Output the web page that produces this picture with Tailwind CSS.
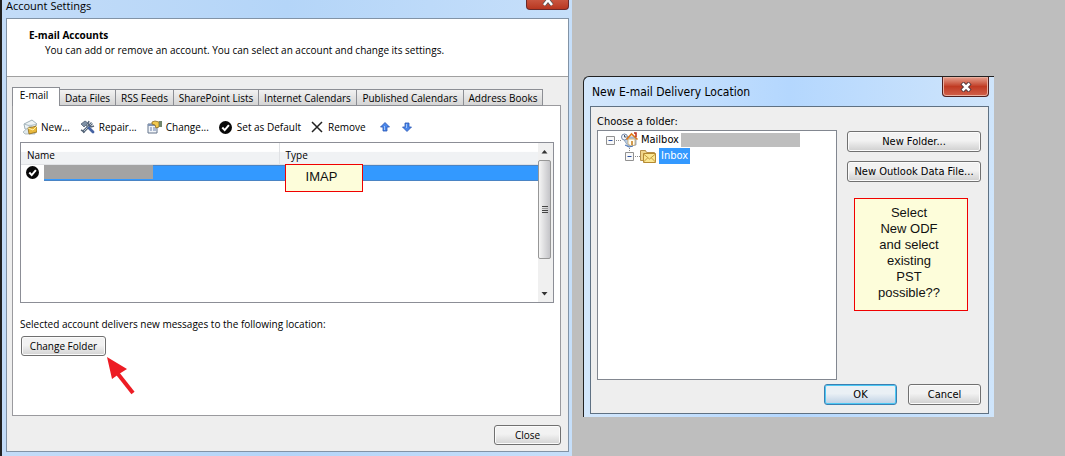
<!DOCTYPE html>
<html lang="en">
<head>
<meta charset="utf-8">
<title>Account Settings</title>
<script src="https://cdn.jsdelivr.net/npm/@tailwindcss/browser@4"></script>
</head>
<body class="bg-[#bebebe] text-black">
<main class="grid min-h-screen grid-cols-[572fr_11fr_411fr_71fr]">

  <!-- Account Settings window -->
  <section class="flex flex-col border-l-2 border-[#222] bg-linear-to-r from-[#c3dcf8] via-[#b4d5f8] to-[#c6dffa] pr-[3px] pb-1 pl-1 font-['Open_Sans','Noto_Sans',sans-serif] text-[10px] leading-4 font-medium" aria-labelledby="t1">
    <header class="flex h-[18px] items-start justify-between">
      <h1 id="t1" class="text-[11px] leading-3 font-normal">Account Settings</h1>
      <button aria-label="Close window" class="flex h-[10px] w-[43px] items-end justify-center overflow-hidden rounded-b border border-t-0 border-[#6b2a2a] bg-linear-to-b from-[#c9553f] to-[#b8361f]">
        <svg class="h-[9px] w-3" viewBox="0 0 12 9"><path d="M2-5l8 10M10-5L2 5" stroke="#555" stroke-width="4"/><path d="M2-5l8 10M10-5L2 5" stroke="#fff" stroke-width="2.5"/></svg>
      </button>
    </header>
    <div class="flex flex-1 flex-col border border-[#8293a6] bg-[#eee]">
      <div class="h-[58px] border-b border-[#a0a0a0] bg-white pt-[8px] pl-[22px]">
        <h2 class="text-[10px] leading-4 font-bold">E-mail Accounts</h2>
        <p class="pl-4 leading-[14px]">You can add or remove an account. You can select an account and change its settings.</p>
      </div>
      <div class="flex flex-1 flex-col pt-[10px] pr-[7px] pl-[5px]">
        <div role="tablist" class="relative z-10 -mb-px flex items-end leading-[14px] whitespace-nowrap">
          <button role="tab" aria-selected="true" class="h-[19px] w-12 border border-b-0 border-[#8c8e94] bg-white pb-1 pr-1 text-center">E-mail</button>
          <button role="tab" class="h-[17px] w-14 border border-l-0 border-[#8c8e94] bg-linear-to-b from-[#f2f2f2] to-[#d4d4d4]">Data Files</button>
          <button role="tab" class="h-[17px] w-[58px] border border-l-0 border-[#8c8e94] bg-linear-to-b from-[#f2f2f2] to-[#d4d4d4]">RSS Feeds</button>
          <button role="tab" class="h-[17px] w-[85px] border border-l-0 border-[#8c8e94] bg-linear-to-b from-[#f2f2f2] to-[#d4d4d4]">SharePoint Lists</button>
          <button role="tab" class="h-[17px] w-[98px] border border-l-0 border-[#8c8e94] bg-linear-to-b from-[#f2f2f2] to-[#d4d4d4]">Internet Calendars</button>
          <button role="tab" class="h-[17px] w-[107px] border border-l-0 border-[#8c8e94] bg-linear-to-b from-[#f2f2f2] to-[#d4d4d4]">Published Calendars</button>
          <button role="tab" class="h-[17px] w-[79px] border border-l-0 border-[#8c8e94] bg-linear-to-b from-[#f2f2f2] to-[#d4d4d4]">Address Books</button>
        </div>
        <div role="tabpanel" class="flex-1 border border-[#9a9a9e] bg-white pt-[13px] pr-[6px] pl-[7px]">
          <div class="flex h-4 items-center gap-[10px] pl-[3px] whitespace-nowrap">
            <button class="flex items-center gap-1">
              <svg class="h-4 w-[14px]" viewBox="0 0 14 16"><path d="M1 5l8-4 5 4-5 6-7-1z" fill="#eef3f5" stroke="#9fb0b8"/><path d="M1 5l6 2 7-2M0 13l7-6 5 3v5H2z" fill="#dfe8ec" stroke="#a5b3ba" stroke-width=".8"/><path d="M5 9l9-2v6l-8 2z" fill="#e9b93c" stroke="#8c6a19" stroke-width=".8"/><path d="M5 9l5 2 4-4" fill="none" stroke="#fff0ac"/></svg>New...</button>
            <button class="flex items-center gap-1">
              <svg class="h-[14px] w-[15px]" viewBox="0 0 15 14"><path d="M3 12L12 3" stroke="#58677a" stroke-width="2.6"/><path d="M3 12L12 3" stroke="#b9c8d6" stroke-width="1"/><path d="M9 1l-1 3 3 3 3-1M1 10l2 1 1 2" fill="none" stroke="#58677a" stroke-width="1.5"/><path d="M1 4l4-3 3 2-4 4z" fill="#7f91a5" stroke="#46566a" stroke-width=".7"/><path d="M6 5l3 3" stroke="#66788c" stroke-width="1.6"/><path d="M9 8l4 4" stroke="#4563a3" stroke-width="2.8" stroke-linecap="round"/></svg>Repair...</button>
            <button class="flex items-center gap-1">
              <svg class="h-[14px] w-[15px]" viewBox="0 0 15 14"><path d="M1 4h9v9H1z" fill="#f1f4f8" stroke="#65758c"/><path d="M1 4h9v2H1z" fill="#8094b4"/><path d="M3 8h2m1 0h3M3 10h2m1 0h3" stroke="#687fa9"/><path d="M5 2l3-1 4 1v5l-3 1-1-3-3-1z" fill="#f1c94f" stroke="#8d6b24" stroke-width=".8"/><path d="M12 1h3v6h-3z" fill="#72866c"/></svg>Change...</button>
            <button class="flex items-center gap-[5px]">
              <svg class="h-[13px] w-[13px]" viewBox="0 0 13 13"><circle cx="6.500" cy="6.500" r="6.500" fill="#080808"/><path d="M3.300 6.500l2.400 2.600 4.200-5" fill="none" stroke="#fff" stroke-width="2"/></svg>Set as Default</button>
            <button class="flex items-center gap-[5px]">
              <svg class="h-3 w-3" viewBox="0 0 12 12"><path d="M1 1l10 10M11 1L1 11" stroke="#222" stroke-width="1.500"/></svg>Remove</button>
            <button aria-label="Move up" class="ml-1"><svg class="h-[10px] w-[10px]" viewBox="0 0 10 10"><path d="M5 .5L9.500 5H7v4H3V5H.5z" fill="#4a86ea" stroke="#2a56b4" stroke-width=".8"/><path d="M4 4h1v4H4z" fill="#9fc6fb"/></svg></button>
            <button aria-label="Move down" class="ml-[2px]"><svg class="h-[10px] w-[10px]" viewBox="0 0 10 10"><path d="M5 9.500L.5 5H3V1h4v4h2.500z" fill="#4a86ea" stroke="#2a56b4" stroke-width=".8"/><path d="M4 2h1v4H4z" fill="#9fc6fb"/></svg></button>
          </div>
          <div class="relative mt-[7px] flex h-[161px] border border-[#8c8e96]">
            <div class="min-w-0 flex-1">
              <table class="w-full table-fixed border-collapse text-left">
                <thead><tr class="h-[21px] bg-linear-to-b from-white from-40% to-[#f0f2f4] to-45%">
                  <th class="w-[258px] border-r border-b border-[#e0e2e5] pt-1 pl-[6px] font-medium">Name</th>
                  <th class="border-b border-[#e0e2e5] pt-1 pl-[6px] font-medium">Type</th>
                </tr></thead>
                <tbody><tr class="h-4">
                  <td class="p-0"><div class="flex h-4 items-center gap-[5px] pl-[5px]">
                    <svg class="h-[13px] w-[13px] shrink-0" viewBox="0 0 13 13" role="img" aria-label="Default account"><circle cx="6.500" cy="6.500" r="6.500" fill="#080808"/><path d="M3.300 6.500l2.400 2.600 4.200-5" fill="none" stroke="#fff" stroke-width="2"/></svg>
                    <div class="h-4 flex-1 border-y border-[#4a84c4] bg-[#3399ff]"><div class="-mt-px h-[14px] w-[109px] bg-[#a3a3a3]"></div></div>
                  </div></td>
                  <td class="p-0"><div class="-mr-[2px] h-4 border-y border-r border-[#4a84c4] bg-[#3399ff]"></div></td>
                </tr></tbody>
              </table>
            </div>
            <div class="flex w-[15px] flex-col items-start bg-[#f0f0f0]">
              <svg class="h-[17px] w-[13px]" viewBox="0 0 13 17"><path d="M3.500 10.500h6l-3-3.500z" fill="#333"/></svg>
              <div class="flex h-[99px] w-[13px] flex-col items-center justify-center gap-px rounded-xs border border-[#979797] bg-linear-to-r from-[#f5f5f5] to-[#c4c4c8]">
                <i class="h-px w-[6px] bg-[#444]"></i><i class="h-px w-[6px] bg-[#999]"></i><i class="h-px w-[6px] bg-[#444]"></i><i class="h-px w-[6px] bg-[#444]"></i>
              </div>
              <svg class="mt-auto h-[17px] w-[13px]" viewBox="0 0 13 17"><path d="M3.500 7h6l-3 3.500z" fill="#333"/></svg>
            </div>
            <div class="absolute top-[21px] left-[264px] flex h-7 w-[78px] items-center justify-center border border-[#f00000] bg-[#fdfdda] pr-[5px] pb-[2px] font-['Liberation_Sans',sans-serif] text-[13px] font-normal text-[#111]">IMAP</div>
          </div>
          <p class="mt-[13px]">Selected account delivers new messages to the following location:</p>
          <div class="mt-1 flex items-start">
            <button class="ml-px h-5 w-[85px] rounded-[3px] border border-[#707070] bg-linear-to-b from-[#f2f2f2] from-45% to-[#d3d3d3] leading-[14px] whitespace-nowrap shadow-[inset_0_0_0_1px_#fbfbfb]">Change Folder</button>
            <svg class="mt-5 h-[40px] w-[30px]" viewBox="0 0 30 40"><path d="M12 18l15 19" stroke="#ed1c24" stroke-width="4"/><path d="M1 1l20 12-8 5-7 5z" fill="#ed1c24"/></svg>
          </div>
        </div>
        <div class="flex h-[35px] items-start justify-end pt-[9px]">
          <button class="h-5 w-[67px] rounded-[3px] border border-[#707070] bg-linear-to-b from-[#f2f2f2] from-45% to-[#d3d3d3] leading-[14px] shadow-[inset_0_0_0_1px_#fbfbfb]">Close</button>
        </div>
      </div>
    </div>
  </section>

  <!-- New E-mail Delivery Location window -->
  <section class="col-start-3 mt-[76px] self-start rounded-tl-md border-t border-l border-[#222] bg-linear-to-r from-[#d3e7fc] via-[#b4d7fe] to-[#cfe5fb] pr-[5px] pb-[3px] pl-[6px] font-['DejaVu_Sans_Condensed','Noto_Sans',sans-serif] text-[11px] leading-4" aria-labelledby="t2">
    <header class="flex h-[29px] items-start justify-between">
      <h1 id="t2" class="pt-[7px] pl-[2px] text-[12px]">New E-mail Delivery Location</h1>
      <button aria-label="Close window" class="flex h-5 w-[47px] items-center justify-center rounded-b-[4px] border border-t-0 border-[#4d1f1f] bg-linear-to-b from-[#e5a08f] from-0% via-[#c03a22] via-50% to-[#d0604a] shadow-[inset_0_0_0_1px_#eab0a0]">
        <svg class="h-[10px] w-3" viewBox="0 0 12 10"><path d="M2 1l8 8M10 1L2 9" stroke="#50363a" stroke-width="4.500"/><path d="M2.500 1.500l7 7M9.500 1.500l-7 7" stroke="#fff" stroke-width="2.500"/></svg>
      </button>
    </header>
    <div class="border border-[#5f7183] bg-[#eee] px-[6px] pt-[7px] pb-2">
      <h2 class="text-[11px] leading-4">Choose a folder:</h2>
      <div class="flex gap-[10px]">
        <ul role="tree" class="min-h-[250px] min-w-0 flex-1 border border-[#828790] bg-white pt-px pl-2">
          <li role="treeitem" aria-expanded="true">
            <div class="flex h-4 items-center whitespace-nowrap">
              <svg class="h-4 w-[34px]" viewBox="0 0 34 16"><path d="M10 8.500h6" stroke="#888" stroke-dasharray="1 1"/><path d="M.5 4.500h8v8h-8z" fill="#f8f8f8" stroke="#919191"/><path d="M2.500 8.500h4" stroke="#2c50a0"/><path d="M18 8l4 6 8-1V5h-9z" fill="#b9cfe8" stroke="#8497b0" stroke-width=".8"/><circle cx="18.500" cy="5" r="3" fill="#f1f5fb" stroke="#7487a8"/><path d="M18.500 3v2h2" fill="none" stroke="#456"/><path d="M22 7h7v6l-4 1-3-2z" fill="#fffdf3" stroke="#c29a55" stroke-width=".7"/><path d="M20.500 7.500L25.500 2l6 5.500" fill="none" stroke="#e07a1b" stroke-width="1.600"/><path d="M28 1h2v4" fill="none" stroke="#bb2b18" stroke-width="1.500"/><path d="M25 9h2v4h-2z" fill="#d39a4d"/><path d="M19 13l4 2 4-1" fill="none" stroke="#3e6cb4"/></svg>
              <span class="pl-px">Mailbox</span><span class="ml-[2px] h-[14px] w-[119px] bg-[#bebebe]"></span>
            </div>
            <ul role="group" class="pl-[19px]">
              <li role="treeitem" aria-selected="true" class="flex h-4 items-center">
                <svg class="h-4 w-[34px]" viewBox="0 0 34 16"><path d="M4.500 0v4M10 8.500h6" stroke="#888" stroke-dasharray="1 1"/><path d="M.5 4.500h8v8h-8z" fill="#f8f8f8" stroke="#919191"/><path d="M2.500 8.500h4" stroke="#2c50a0"/><path d="M15.500 2.500h5l1 2h8v8h-14z" fill="#f0d58b" stroke="#b6914c"/><path d="M18.500 5.500h12v9h-12z" fill="#fbe793" stroke="#b58a32"/><path d="M18.500 6l6 5 6-5M18.500 14l4-4M30.500 14l-4-4" fill="none" stroke="#c39a3c"/></svg>
                <span class="bg-[#3399ff] px-[2px] text-white">Inbox</span>
              </li>
            </ul>
          </li>
        </ul>
        <div class="mr-px flex w-[134px] flex-col pt-px">
          <button class="h-[21px] w-full rounded-[3px] border border-[#707070] bg-linear-to-b from-[#f2f2f2] from-45% to-[#cfcfcf] shadow-[inset_0_0_0_1px_#fbfbfb]">New Folder...</button>
          <button class="mt-[9px] h-[21px] w-full rounded-[3px] border border-[#707070] bg-linear-to-b from-[#f2f2f2] from-45% to-[#cfcfcf] whitespace-nowrap shadow-[inset_0_0_0_1px_#fbfbfb]">New Outlook Data File...</button>
          <p class="mt-4 ml-[7px] h-[113px] w-[114px] border border-[#f00000] bg-[#fdfdda] pt-[6px] pr-1 text-center font-['Liberation_Sans',sans-serif] text-[13px] leading-4 text-[#111]">Select<br>New ODF<br>and select<br>existing<br>PST<br>possible??</p>
        </div>
      </div>
      <div class="mt-1 mr-px flex justify-end gap-[11px]">
        <button class="h-[21px] w-[73px] rounded-[3px] border border-[#3c7fb1] bg-linear-to-b from-[#eaf0f5] from-45% to-[#bdd0e4] shadow-[inset_0_0_0_1px_#4cc8f4]">OK</button>
        <button class="h-[21px] w-[73px] rounded-[3px] border border-[#707070] bg-linear-to-b from-[#f2f2f2] from-45% to-[#cfcfcf] shadow-[inset_0_0_0_1px_#fbfbfb]">Cancel</button>
      </div>
    </div>
  </section>
</main>
</body>
</html>
